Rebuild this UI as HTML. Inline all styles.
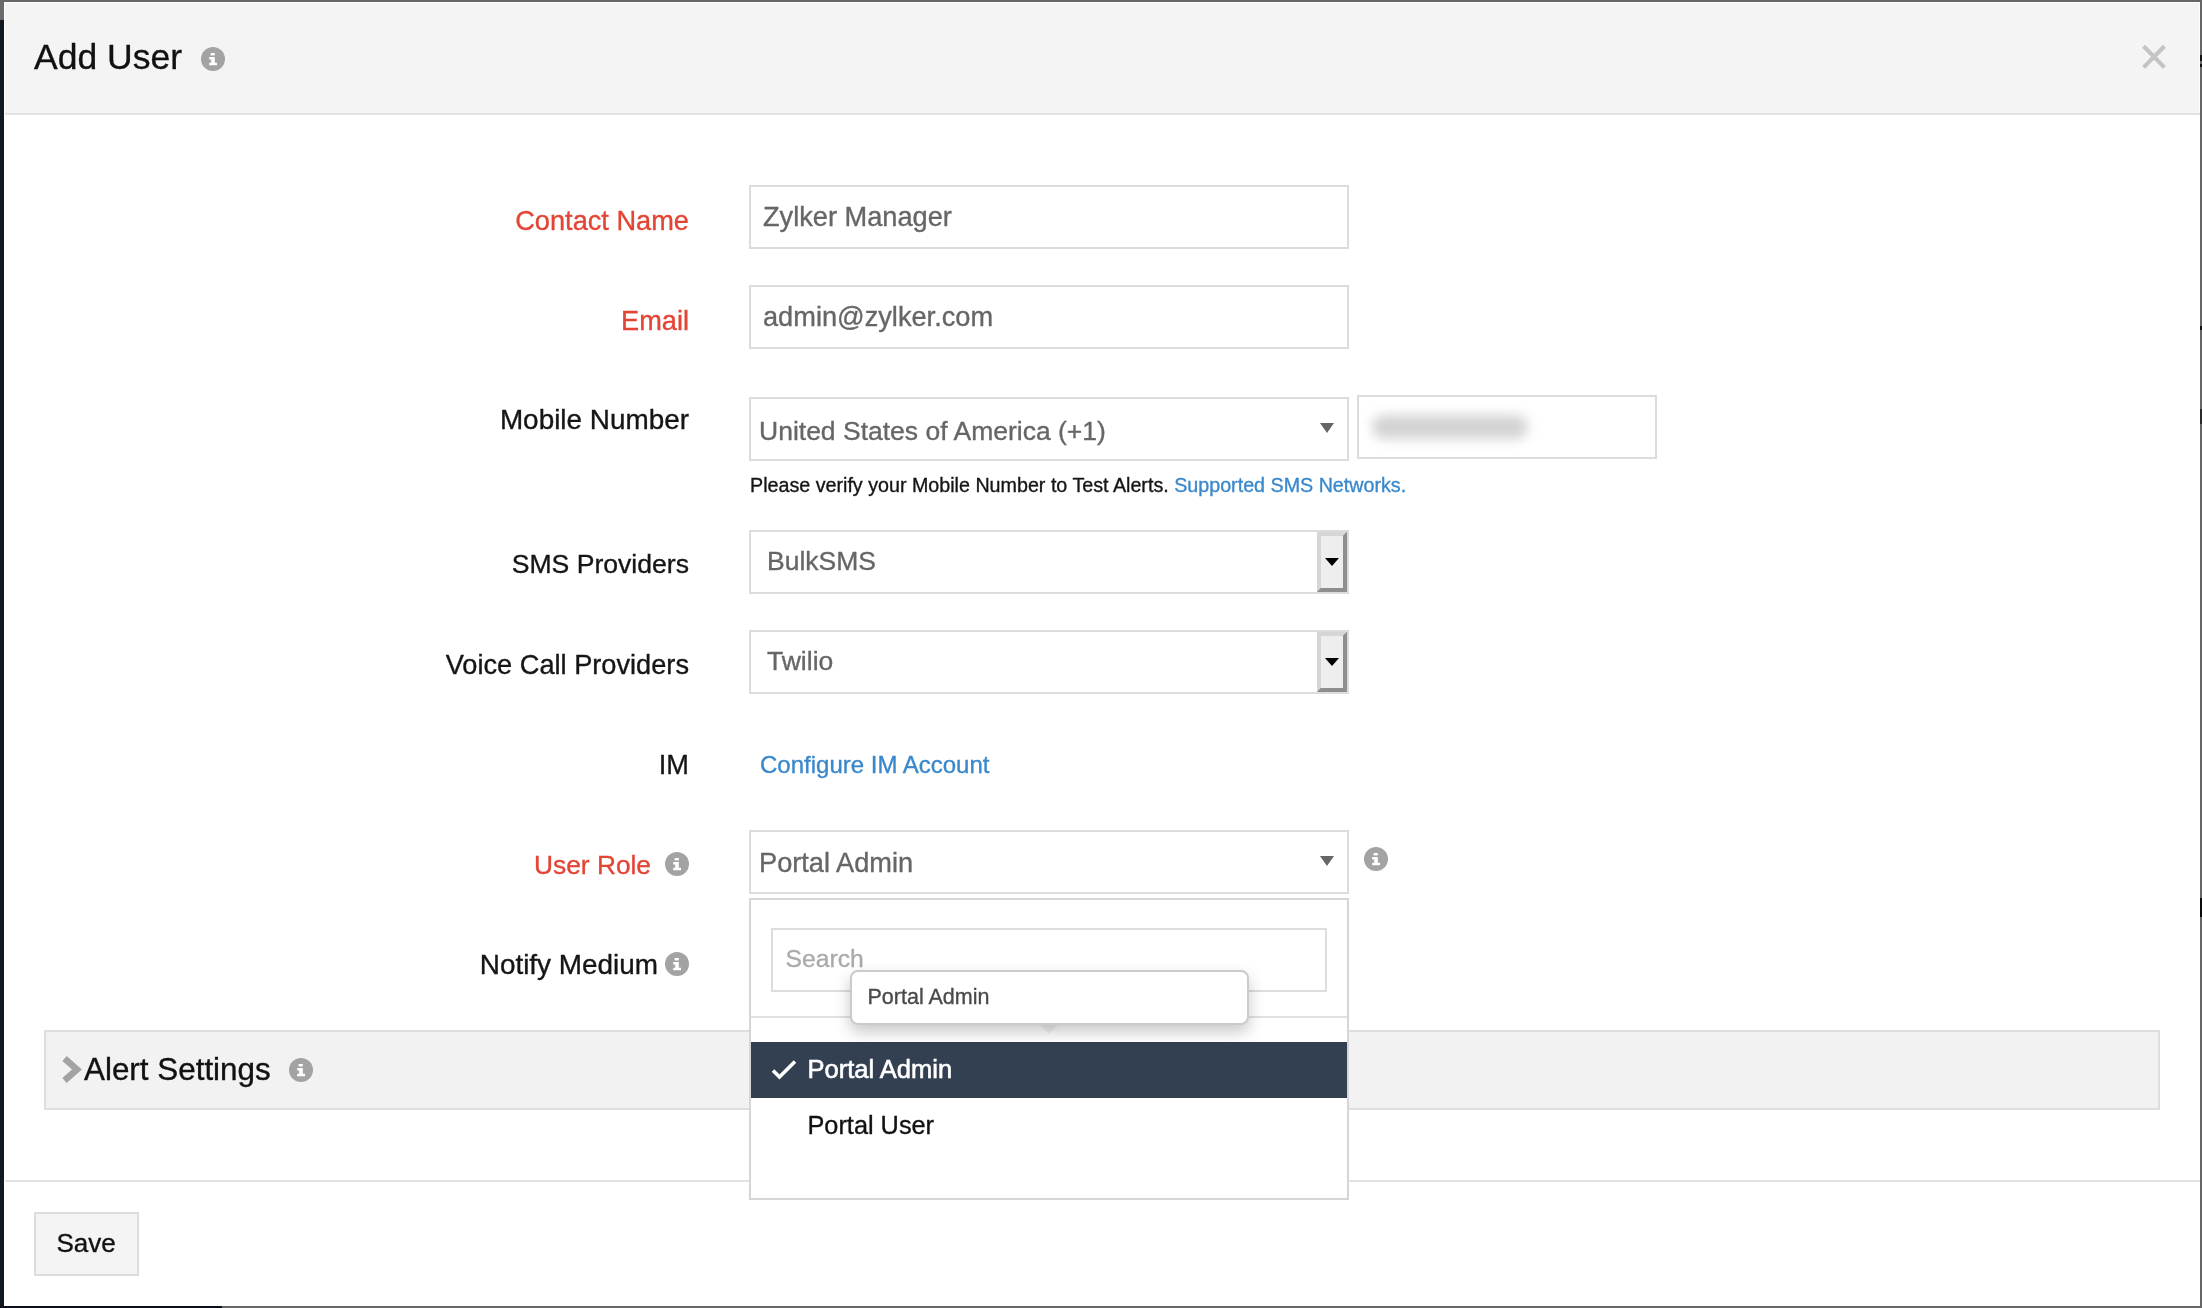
<!DOCTYPE html>
<html><head><meta charset="utf-8"><style>
html,body{margin:0;padding:0;width:2202px;height:1308px;overflow:hidden;background:#fff}
body{position:relative;font-family:"Liberation Sans",sans-serif}
.t{position:absolute;white-space:nowrap;line-height:1;-webkit-text-stroke:0.35px currentColor}
#root{position:absolute;left:0;top:0;width:2202px;height:1308px;filter:grayscale(0.0001)}
svg{display:block}
</style></head><body>
<div id="root">
<div style="position:absolute;left:0px;top:0px;width:2202px;height:1308px;box-sizing:border-box;background:#fff"></div>
<div style="position:absolute;left:0px;top:0px;width:2202px;height:2px;box-sizing:border-box;background:#666"></div>
<div style="position:absolute;left:0px;top:0px;width:4px;height:20px;box-sizing:border-box;background:#6a6a6a"></div>
<div style="position:absolute;left:0px;top:20px;width:4px;height:1288px;box-sizing:border-box;background:#121820"></div>
<div style="position:absolute;left:2200px;top:0px;width:2px;height:1308px;box-sizing:border-box;background:#666"></div>
<div style="position:absolute;left:0px;top:1306px;width:222px;height:2px;box-sizing:border-box;background:#0b111a"></div>
<div style="position:absolute;left:222px;top:1306px;width:1980px;height:2px;box-sizing:border-box;background:#666"></div>
<div style="position:absolute;left:2200px;top:55px;width:2px;height:6px;box-sizing:border-box;background:#111"></div>
<div style="position:absolute;left:2200px;top:64px;width:2px;height:3px;box-sizing:border-box;background:#111"></div>
<div style="position:absolute;left:2200px;top:326px;width:2px;height:4px;box-sizing:border-box;background:#111"></div>
<div style="position:absolute;left:2200px;top:409px;width:2px;height:15px;box-sizing:border-box;background:#2a2a2a"></div>
<div style="position:absolute;left:2200px;top:898px;width:2px;height:19px;box-sizing:border-box;background:#0a0a0a"></div>
<div style="position:absolute;left:5px;top:3px;width:2194px;height:110px;box-sizing:border-box;background:#f4f4f4"></div>
<div style="position:absolute;left:5px;top:113px;width:2195px;height:2px;box-sizing:border-box;background:#e3e3e3"></div>
<div class="t" style="left:34px;top:39.95px;font-size:35.5px;color:#111;">Add User</div>
<svg style="position:absolute;left:201px;top:47px" width="24" height="24" viewBox="0 0 24 24"><circle cx="12" cy="12" r="12" fill="#a3a3a3"/><rect x="9.6" y="6" width="4.2" height="2.4" fill="#fff"/><path d="M8.2 10h5.6v5.8h2.2v2.4H8.2v-2.4h2v-3.4h-2z" fill="#fff"/></svg>
<svg style="position:absolute;left:2138px;top:41px" width="32" height="32" viewBox="0 0 32 32"><path d="M5.6 5.2L26.4 26.4M26.4 5.2L5.6 26.4" stroke="#c4c4c4" stroke-width="4.2" stroke-linecap="butt"/></svg>
<div class="t" style="right:1513px;top:206.98px;font-size:27.2px;color:#e34535;">Contact Name</div>
<div class="t" style="right:1513px;top:306.98px;font-size:27.2px;color:#e34535;">Email</div>
<div class="t" style="right:1513px;top:406.38px;font-size:27.9px;color:#151515;">Mobile Number</div>
<div class="t" style="right:1513px;top:550.98px;font-size:26.6px;color:#151515;">SMS Providers</div>
<div class="t" style="right:1513px;top:650.98px;font-size:27.2px;color:#151515;">Voice Call Providers</div>
<div class="t" style="right:1513px;top:750.98px;font-size:27.2px;color:#151515;">IM</div>
<div class="t" style="right:1551px;top:851.74px;font-size:26.3px;color:#e34535;">User Role</div>
<svg style="position:absolute;left:665px;top:852px" width="24" height="24" viewBox="0 0 24 24"><circle cx="12" cy="12" r="12" fill="#a3a3a3"/><rect x="9.6" y="6" width="4.2" height="2.4" fill="#fff"/><path d="M8.2 10h5.6v5.8h2.2v2.4H8.2v-2.4h2v-3.4h-2z" fill="#fff"/></svg>
<div class="t" style="right:1544px;top:950.98px;font-size:27.9px;color:#151515;">Notify Medium</div>
<svg style="position:absolute;left:665px;top:952px" width="24" height="24" viewBox="0 0 24 24"><circle cx="12" cy="12" r="12" fill="#a3a3a3"/><rect x="9.6" y="6" width="4.2" height="2.4" fill="#fff"/><path d="M8.2 10h5.6v5.8h2.2v2.4H8.2v-2.4h2v-3.4h-2z" fill="#fff"/></svg>
<div style="position:absolute;left:749px;top:185px;width:600px;height:64px;box-sizing:border-box;border:2px solid #dcdcdc;background:#fff"></div>
<div class="t" style="left:763px;top:202.98px;font-size:27.2px;color:#666666;">Zylker Manager</div>
<div style="position:absolute;left:749px;top:285px;width:600px;height:64px;box-sizing:border-box;border:2px solid #dcdcdc;background:#fff"></div>
<div class="t" style="left:763px;top:302.98px;font-size:27.2px;color:#666666;">admin@zylker.com</div>
<div style="position:absolute;left:749px;top:397px;width:600px;height:64px;box-sizing:border-box;border:2px solid #dcdcdc;background:#fff"></div>
<div class="t" style="left:759px;top:417.57px;font-size:26.5px;color:#666666;">United States of America (+1)</div>
<svg style="position:absolute;left:1320px;top:423px" width="14" height="10" viewBox="0 0 14 10"><path d="M0 0H14L7.0 10Z" fill="#666"/></svg>
<div style="position:absolute;left:1357px;top:395px;width:300px;height:64px;box-sizing:border-box;border:2px solid #dcdcdc;background:#fff"></div>
<div style="position:absolute;left:1372px;top:415px;width:156px;height:24px;box-sizing:border-box;background:#d3d3d3;border-radius:12px;filter:blur(6px)"></div>
<div class="t" style="left:750px;top:476.32px;font-size:19.7px;color:#151515;">Please verify your Mobile Number to Test Alerts. <span style="color:#3a88cc">Supported SMS Networks.</span></div>
<div style="position:absolute;left:749px;top:530px;width:600px;height:64px;box-sizing:border-box;border:2px solid #dcdcdc;background:#fff"></div>
<div class="t" style="left:767px;top:548.07px;font-size:26.5px;color:#666666;">BulkSMS</div>
<div style="position:absolute;left:1317px;top:532px;width:30px;height:60px;box-sizing:border-box;background:#8e8e8e"></div>
<svg style="position:absolute;left:1317px;top:532px" width="30" height="60"><path d="M0 0H30L26 4H4V56L0 60Z" fill="#d6d6d6"/><path d="M30 0V60H0L4 56H26V4Z" fill="#8e8e8e"/></svg>
<div style="position:absolute;left:1321px;top:536px;width:22px;height:52px;box-sizing:border-box;background:#eeeeee"></div>
<svg style="position:absolute;left:1325px;top:558px" width="14" height="8" viewBox="0 0 14 8"><path d="M0 0H14L7.0 8Z" fill="#000"/></svg>
<div style="position:absolute;left:749px;top:630px;width:600px;height:64px;box-sizing:border-box;border:2px solid #dcdcdc;background:#fff"></div>
<div class="t" style="left:767px;top:648.07px;font-size:26.5px;color:#666666;">Twilio</div>
<div style="position:absolute;left:1317px;top:632px;width:30px;height:60px;box-sizing:border-box;background:#8e8e8e"></div>
<svg style="position:absolute;left:1317px;top:632px" width="30" height="60"><path d="M0 0H30L26 4H4V56L0 60Z" fill="#d6d6d6"/><path d="M30 0V60H0L4 56H26V4Z" fill="#8e8e8e"/></svg>
<div style="position:absolute;left:1321px;top:636px;width:22px;height:52px;box-sizing:border-box;background:#eeeeee"></div>
<svg style="position:absolute;left:1325px;top:658px" width="14" height="8" viewBox="0 0 14 8"><path d="M0 0H14L7.0 8Z" fill="#000"/></svg>
<div class="t" style="left:760px;top:753.28px;font-size:24px;color:#3a88cc;">Configure IM Account</div>
<div style="position:absolute;left:749px;top:830px;width:600px;height:64px;box-sizing:border-box;border:2px solid #dcdcdc;background:#fff"></div>
<div class="t" style="left:759px;top:848.98px;font-size:27.2px;color:#666666;">Portal Admin</div>
<svg style="position:absolute;left:1320px;top:856px" width="14" height="10" viewBox="0 0 14 10"><path d="M0 0H14L7.0 10Z" fill="#666"/></svg>
<svg style="position:absolute;left:1364px;top:847px" width="24" height="24" viewBox="0 0 24 24"><circle cx="12" cy="12" r="12" fill="#a3a3a3"/><rect x="9.6" y="6" width="4.2" height="2.4" fill="#fff"/><path d="M8.2 10h5.6v5.8h2.2v2.4H8.2v-2.4h2v-3.4h-2z" fill="#fff"/></svg>
<div style="position:absolute;left:44px;top:1030px;width:2116px;height:80px;box-sizing:border-box;border:2px solid #dedede;background:#f2f2f2"></div>
<svg style="position:absolute;left:60px;top:1053px" width="24" height="32" viewBox="0 0 24 32"><path d="M4.5 5.5L17 16.5L4.5 27.5" fill="none" stroke="#a3a3a3" stroke-width="6.5"/></svg>
<div class="t" style="left:84px;top:1054.42px;font-size:31.4px;color:#111;">Alert Settings</div>
<svg style="position:absolute;left:289px;top:1058px" width="24" height="24" viewBox="0 0 24 24"><circle cx="12" cy="12" r="12" fill="#a3a3a3"/><rect x="9.6" y="6" width="4.2" height="2.4" fill="#fff"/><path d="M8.2 10h5.6v5.8h2.2v2.4H8.2v-2.4h2v-3.4h-2z" fill="#fff"/></svg>
<div style="position:absolute;left:5px;top:1180px;width:2195px;height:2px;box-sizing:border-box;background:#e3e3e3"></div>
<div style="position:absolute;left:34px;top:1212px;width:105px;height:64px;box-sizing:border-box;border:2px solid #dcdcdc;background:#f4f4f4"></div>
<div class="t" style="left:56.5px;top:1229.99px;font-size:26px;color:#111;">Save</div>
<div style="position:absolute;left:749px;top:898px;width:600px;height:302px;box-sizing:border-box;border:2px solid #d6d6d6;background:#fff"></div>
<div style="position:absolute;left:771px;top:928px;width:556px;height:64px;box-sizing:border-box;border:2px solid #dddddd;background:#fff"></div>
<div class="t" style="left:785.5px;top:947.09px;font-size:24.7px;color:#aaaaaa;">Search</div>
<div style="position:absolute;left:751px;top:1016px;width:596px;height:2px;box-sizing:border-box;background:#e1e1e1"></div>
<div style="position:absolute;left:751px;top:1042px;width:596px;height:56px;box-sizing:border-box;background:#334051"></div>
<svg style="position:absolute;left:770px;top:1058px" width="28" height="24" viewBox="0 0 28 24"><path d="M3 12.5L9.5 19L25 3.5" fill="none" stroke="#fff" stroke-width="3.6"/></svg>
<div class="t" style="left:807.5px;top:1056.91px;font-size:25.5px;color:#fff;-webkit-text-stroke:0.6px #fff">Portal Admin</div>
<div class="t" style="left:807.5px;top:1112.58px;font-size:25.3px;color:#111;">Portal User</div>
<svg style="position:absolute;left:1037px;top:1022px" width="24" height="14"><path d="M0 0H24L12 12Z" fill="rgba(0,0,0,0.05)"/></svg>
<div style="position:absolute;left:850px;top:970px;width:399px;height:55px;box-sizing:border-box;border:2px solid #cbcbcb;border-radius:8px;background:#fff;box-shadow:0 7px 16px rgba(0,0,0,0.22)"></div>
<div class="t" style="left:867.5px;top:987.30px;font-size:21.5px;color:#4a4a4a;">Portal Admin</div>
</div></body></html>
